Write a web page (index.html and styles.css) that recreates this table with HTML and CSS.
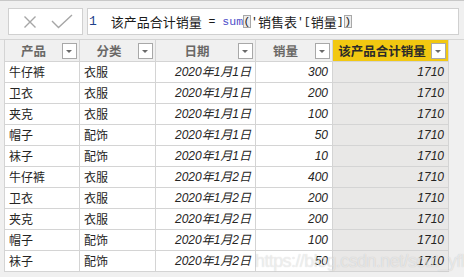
FILE: index.html
```html
<!DOCTYPE html>
<html lang="zh">
<head>
<meta charset="utf-8">
<title>该产品合计销量</title>
<link rel="stylesheet" href="styles.css">
</head>
<body>
<div class="app">
  <div class="formula-bar">
    <div class="actions">
      <svg class="icon-x" width="14" height="14" viewBox="0 0 14 14"><path d="M1.5 1.5 L12.5 12.5 M12.5 1.5 L1.5 12.5" /></svg>
      <svg class="icon-check" width="22" height="15" viewBox="0 0 22 15"><path d="M1 7 L7.5 13.5 L21 1" /></svg>
    </div>
    <div class="formula">
      <span class="ln">1</span><span class="sp">  </span><span class="cjk">该产品合计销量</span><span class="sp"> = </span><span class="fn">sum</span><span class="br">(</span><span class="mono">'</span><span class="cjk">销售表</span><span class="mono">'[</span><span class="cjk">销量</span><span class="mono">]</span><span class="br">)</span>
    </div>
  </div>
  <div class="sep"></div>
  <table class="grid">
    <colgroup>
      <col class="c1"><col class="c2"><col class="c3"><col class="c4"><col class="c5">
    </colgroup>
    <thead>
      <tr>
        <th><div class="th"><span class="lbl">产品</span><span class="dd"></span></div></th>
        <th><div class="th"><span class="lbl">分类</span><span class="dd"></span></div></th>
        <th><div class="th"><span class="lbl">日期</span><span class="dd"></span></div></th>
        <th><div class="th"><span class="lbl">销量</span><span class="dd"></span></div></th>
        <th class="sel"><div class="th"><span class="lbl">该产品合计销量</span><span class="dd"></span></div></th>
      </tr>
    </thead>
    <tbody>
      <tr><td>牛仔裤</td><td>衣服</td><td class="r">2020年1月1日</td><td class="r">300</td><td class="r calc">1710</td></tr>
      <tr><td>卫衣</td><td>衣服</td><td class="r">2020年1月1日</td><td class="r">200</td><td class="r calc">1710</td></tr>
      <tr><td>夹克</td><td>衣服</td><td class="r">2020年1月1日</td><td class="r">100</td><td class="r calc">1710</td></tr>
      <tr><td>帽子</td><td>配饰</td><td class="r">2020年1月1日</td><td class="r">50</td><td class="r calc">1710</td></tr>
      <tr><td>袜子</td><td>配饰</td><td class="r">2020年1月1日</td><td class="r">10</td><td class="r calc">1710</td></tr>
      <tr><td>牛仔裤</td><td>衣服</td><td class="r">2020年1月2日</td><td class="r">400</td><td class="r calc">1710</td></tr>
      <tr><td>卫衣</td><td>衣服</td><td class="r">2020年1月2日</td><td class="r">200</td><td class="r calc">1710</td></tr>
      <tr><td>夹克</td><td>衣服</td><td class="r">2020年1月2日</td><td class="r">200</td><td class="r calc">1710</td></tr>
      <tr><td>帽子</td><td>配饰</td><td class="r">2020年1月2日</td><td class="r">100</td><td class="r calc">1710</td></tr>
      <tr><td>袜子</td><td>配饰</td><td class="r">2020年1月2日</td><td class="r">50</td><td class="r calc">1710</td></tr>
    </tbody>
  </table>
  <div class="watermark">https://blog.csdn.net/scut_yfli</div>
</div>
</body>
</html>
```
FILE: styles.css
```css
* { box-sizing: border-box; }
html, body { margin: 0; padding: 0; }
body {
  background: #f0f0f0;
  font-family: "Liberation Sans", "Noto Sans CJK SC", sans-serif;
  color: #252423;
  width: 464px;
  height: 277px;
  overflow: hidden;
}
.app {
  position: relative;
  border-top: 1px solid #c8c8c8;
  height: 277px;
}
.formula-bar {
  display: flex;
  gap: 4px;
  padding: 7px 5px 0 8px;
  height: 35px;
}
.actions {
  width: 75px;
  height: 27px;
  background: #fff;
  border: 1px solid #d0d0d0;
  display: flex;
  align-items: center;
  padding-left: 14px;
  gap: 14px;
}
.actions svg path {
  fill: none;
  stroke: #a6a6a6;
  stroke-width: 1.4;
}
.formula {
  flex: 1;
  height: 27px;
  background: #fff;
  border: 1px solid #d0d0d0;
  display: flex;
  align-items: center;
  padding-left: 1px;
  white-space: pre;
  font-size: 13px;
  color: #1b1b1b;
}
.formula .ln, .formula .sp, .formula .fn, .formula .mono, .formula .br {
  font-family: "Liberation Mono", monospace;
  font-size: 11.5px;
}
.formula .ln { color: #1e3f8a; font-size: 13px; }
.formula .fn { color: #4d4dc8; }
.formula .cjk { font-family: "Noto Sans CJK SC", sans-serif; font-size: 13px; }
.formula .br {
  background: #ececec;
  outline: 1px solid #a8a8a8;
  outline-offset: -1px;
  padding: 0 0.5px;
}
.sep {
  height: 4px;
  border-bottom: 1px solid #d6d6d6;
}
.grid {
  margin-left: 4px;
  margin-top: -1px;
  border-collapse: collapse;
  table-layout: fixed;
  width: 444px;
}
.c1 { width: 75px; }
.c2 { width: 76px; }
.c3 { width: 100px; }
.c4 { width: 77px; }
.c5 { width: 116px; }
.grid th, .grid td {
  border: 1px solid #d4d4d4;
  padding: 0;
}
.grid th {
  height: 22px;
  background: #f0f0f0;
  font-family: "Noto Sans CJK SC", sans-serif;
  font-size: 12.5px;
  font-weight: 700;
  color: #6a6866;
}
.grid th.sel {
  background: #f2c811;
  color: #2b2a29;
}
.th {
  display: flex;
  align-items: center;
  padding-right: 2px;
  height: 21px;
}
.lbl {
  flex: 1;
  text-align: center;
  line-height: 16px;
}
.dd {
  position: relative;
  width: 15px;
  height: 16px;
  background: #fff;
  border: 1px solid #a8a8a8;
  flex: none;
}
.dd::after {
  content: "";
  position: absolute;
  left: 3px;
  top: 6px;
  border-left: 3.5px solid transparent;
  border-right: 3.5px solid transparent;
  border-top: 3.5px solid #6a6a6a;
}
.grid td {
  height: 21px;
  background: #fff;
  font-size: 12px;
  padding: 0 4px;
  white-space: nowrap;
  overflow: hidden;
  line-height: 18px;
  font-family: "Noto Sans CJK SC", sans-serif;
}
.grid td.r {
  text-align: right;
  font-style: italic;
  font-family: "Liberation Sans", "Noto Sans CJK SC", sans-serif;
}
.grid td.calc {
  background: #e9e8e7;
}
.watermark {
  position: absolute;
  left: 255px;
  top: 250px;
  font-family: "Liberation Sans", sans-serif;
  font-size: 18px;
  letter-spacing: -0.6px;
  color: rgba(255, 255, 255, 0.55);
  text-shadow: 0 0 1px rgba(0, 0, 0, 0.18);
  pointer-events: none;
  white-space: nowrap;
}
```
